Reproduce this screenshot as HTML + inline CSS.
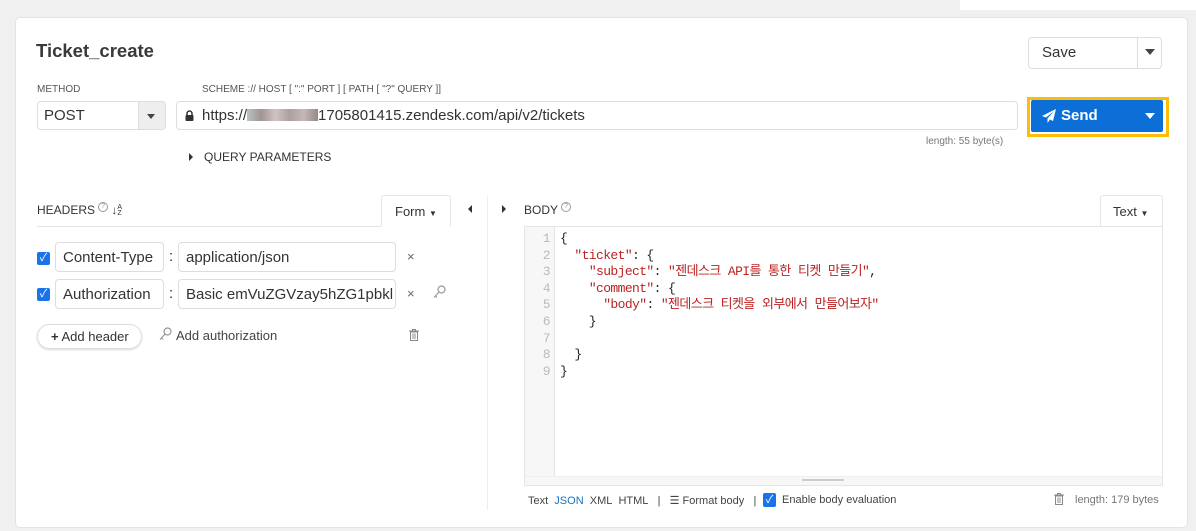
<!DOCTYPE html>
<html><head><meta charset="utf-8"><style>
*{box-sizing:border-box;margin:0;padding:0}
body{width:1196px;height:531px;background:#f0f0f0;font-family:"Liberation Sans","Noto Sans CJK KR",sans-serif;color:#333;position:relative;overflow:hidden}
.a{position:absolute}
.card{left:15px;top:17px;width:1173px;height:511px;background:#fff;border-radius:5px;border:1px solid #e4e4e4}
.lbl{font-size:10px;color:#555}
.inp{border:1px solid #ddd;border-radius:4px;background:#fff;font-size:15px}
.code{font-family:"Liberation Mono","Noto Sans CJK KR",monospace;font-size:13px;color:#222;letter-spacing:-0.6px}
.s{color:#b22}
.ln{color:#bbb;text-align:right;width:22px}
.q{display:inline-block;width:10px;height:10px;border:1px solid #999;border-radius:50%;font-size:7px;line-height:8px;text-align:center;color:#999;vertical-align:6px;margin-left:3px}
</style></head><body>
<div class="a" style="left:960px;top:0;width:236px;height:10px;background:#fff"></div>
<div class="a card"></div>
<div class="a" style="left:36px;top:40px;font-size:18.5px;font-weight:bold;color:#3a3a3a">Ticket_create</div>
<div class="a inp" style="left:1028px;top:37px;width:134px;height:32px"></div>
<div class="a" style="left:1137px;top:38px;width:1px;height:30px;background:#ddd"></div>
<div class="a" style="left:1042px;top:44px;font-size:15px">Save</div>
<div class="a" style="left:1145px;top:49px;width:0;height:0;border-left:5px solid transparent;border-right:5px solid transparent;border-top:6px solid #444"></div>
<div class="a lbl" style="left:37px;top:84px">METHOD</div>
<div class="a lbl" style="left:202px;top:84px">SCHEME :// HOST [ ":" PORT ] [ PATH [ "?" QUERY ]]</div>
<div class="a inp" style="left:37px;top:101px;width:129px;height:29px;overflow:hidden"><div class="a" style="left:100px;top:0;width:29px;height:29px;background:#eee;border-left:1px solid #ddd"></div></div>
<div class="a" style="left:44px;top:107px;font-size:15px">POST</div>
<div class="a" style="left:147px;top:114px;border-left:4px solid transparent;border-right:4px solid transparent;border-top:5px solid #444"></div>
<div class="a inp" style="left:176px;top:101px;width:842px;height:29px"></div>
<svg class="a" style="left:185px;top:110px" width="9" height="11" viewBox="0 0 9 11"><path d="M2 5V3.5a2.5 2.5 0 0 1 5 0V5" fill="none" stroke="#333" stroke-width="1.5"/><rect x="0.5" y="5" width="8" height="6" rx="1" fill="#333"/></svg>
<div class="a" style="left:202px;top:107px;font-size:15px">https://<span style="display:inline-block;width:71px;height:12px;background:linear-gradient(90deg,#9aa 0,#766 20%,#baa 40%,#877 60%,#a99 80%,#655);opacity:.7;vertical-align:-1px"></span>1705801415.zendesk.com/api/v2/tickets</div>
<div class="a" style="left:1027px;top:97px;width:142px;height:40px;border:3px solid #fbbd08"></div>
<div class="a" style="left:1031px;top:100px;width:132px;height:32px;background:#0c6fd8;border-radius:2px"></div>
<div class="a" style="left:1137px;top:100px;width:1px;height:32px;background:#2a63b0"></div>
<svg class="a" style="left:1042px;top:109px" width="14" height="14" viewBox="0 0 14 14"><path d="M14 0L0 7l4 1.5L12 2 5.5 9.5V14l2.5-3.5 3 1.5z" fill="#fff"/></svg>
<div class="a" style="left:1061px;top:107px;font-size:15px;font-weight:bold;color:#fff">Send</div>
<div class="a" style="left:1145px;top:113px;border-left:5px solid transparent;border-right:5px solid transparent;border-top:6px solid #fff"></div>
<div class="a" style="left:926px;top:136px;font-size:10px;color:#777">length: 55 byte(s)</div>
<div class="a" style="left:189px;top:153px;border-top:4px solid transparent;border-bottom:4px solid transparent;border-left:4px solid #333"></div>
<div class="a" style="left:204px;top:150px;font-size:12px;color:#333">QUERY PARAMETERS</div>
<!-- headers -->
<div class="a" style="left:37px;top:202px;font-size:12px;white-space:nowrap">HEADERS<span class="q">?</span> <span style="font-size:12px;font-weight:bold">↓</span><span style="font-size:7px;display:inline-block;line-height:6px;vertical-align:-1px">A<br>Z</span></div>
<div class="a" style="left:37px;top:226px;width:413px;height:1px;background:#e5e5e5"></div>
<div class="a" style="left:381px;top:195px;width:70px;height:32px;border:1px solid #e5e5e5;border-bottom:1px solid #fff;border-radius:3px 3px 0 0;background:#fff;font-size:13px;padding:8px 0 0 13px">Form <span style="font-size:8px">▼</span></div>
<div class="a" style="left:468px;top:205px;border-top:4px solid transparent;border-bottom:4px solid transparent;border-right:4px solid #333"></div>
<div class="a" style="left:487px;top:195px;width:1px;height:315px;background:#eee"></div>
<div class="a" style="left:502px;top:205px;border-top:4px solid transparent;border-bottom:4px solid transparent;border-left:4px solid #333"></div>
<!-- rows -->
<div class="a" style="left:37px;top:252px;width:13px;height:13px;background:#1a73e8;border-radius:2px;color:#fff;font-size:11px;line-height:13px;text-align:center">✓</div>
<div class="a inp" style="left:55px;top:242px;width:109px;height:30px;padding:6px 0 0 7px">Content-Type</div>
<div class="a" style="left:169px;top:248px;font-size:15px">:</div>
<div class="a inp" style="left:178px;top:242px;width:218px;height:30px;padding:6px 0 0 7px">application/json</div>
<div class="a" style="left:407px;top:249px;font-size:13px;color:#666">×</div>
<div class="a" style="left:37px;top:288px;width:13px;height:13px;background:#1a73e8;border-radius:2px;color:#fff;font-size:11px;line-height:13px;text-align:center">✓</div>
<div class="a inp" style="left:55px;top:279px;width:109px;height:30px;padding:6px 0 0 7px">Authorization</div>
<div class="a" style="left:169px;top:285px;font-size:15px">:</div>
<div class="a inp" style="left:178px;top:279px;width:218px;height:30px;padding:6px 0 0 7px;overflow:hidden;white-space:nowrap">Basic emVuZGVzay5hZG1pbkl</div>
<div class="a" style="left:407px;top:286px;font-size:13px;color:#666">×</div>
<svg class="a" style="left:433px;top:285px" width="13" height="14" viewBox="0 0 13 14"><circle cx="8.5" cy="4.5" r="3.5" fill="none" stroke="#999" stroke-width="1.2"/><path d="M6 7L1 12.5M2.5 11l1.5 1.5" stroke="#999" stroke-width="1.2" fill="none"/></svg>
<div class="a" style="left:37px;top:324px;width:105px;height:25px;border:1px solid #ddd;border-radius:13px;box-shadow:0 1px 2px rgba(0,0,0,.15);font-size:13px;padding:4px 0 0 13px"><b>+</b> Add header</div>
<svg class="a" style="left:159px;top:327px" width="13" height="14" viewBox="0 0 13 14"><circle cx="8.5" cy="4.5" r="3.5" fill="none" stroke="#999" stroke-width="1.2"/><path d="M6 7L1 12.5M2.5 11l1.5 1.5" stroke="#999" stroke-width="1.2" fill="none"/></svg>
<div class="a" style="left:176px;top:328px;font-size:13px;color:#444">Add authorization</div>
<svg class="a" style="left:409px;top:329px" width="10" height="12" viewBox="0 0 10 12"><path d="M0 2h10M3.5 2V.5h3V2M1.5 3h7v8.5h-7z M4 4.5v5.5M6 4.5v5.5" fill="none" stroke="#888" stroke-width="1"/></svg>
<!-- body -->
<div class="a" style="left:524px;top:202px;font-size:12px">BODY<span class="q">?</span></div>
<div class="a" style="left:1100px;top:195px;width:63px;height:32px;border:1px solid #e5e5e5;border-bottom:none;border-radius:3px 3px 0 0;font-size:13px;padding:8px 0 0 12px">Text <span style="font-size:8px">▼</span></div>
<div class="a" style="left:524px;top:226px;width:639px;height:260px;border:1px solid #e5e5e5"></div>
<div class="a" style="left:525px;top:227px;width:30px;height:250px;background:#f7f7f7;border-right:1px solid #e5e5e5"></div>
<div class="a" style="left:525px;top:476px;width:637px;height:9px;background:#f7f7f7;border-top:1px solid #eee"></div>
<div class="a" style="left:802px;top:479px;width:42px;height:2px;background:#ccc"></div>
<div class="a code" style="left:528px;top:231px;line-height:16.6px">
<div style="display:flex"><div class="ln">1</div><div style="padding-left:10px;white-space:pre">{</div></div>
<div style="display:flex"><div class="ln">2</div><div style="padding-left:10px;white-space:pre">  <span class="s">"ticket"</span>: {</div></div>
<div style="display:flex"><div class="ln">3</div><div style="padding-left:10px;white-space:pre">    <span class="s">"subject"</span>: <span class="s">"젠데스크 API를 통한 티켓 만들기"</span>,</div></div>
<div style="display:flex"><div class="ln">4</div><div style="padding-left:10px;white-space:pre">    <span class="s">"comment"</span>: {</div></div>
<div style="display:flex"><div class="ln">5</div><div style="padding-left:10px;white-space:pre">      <span class="s">"body"</span>: <span class="s">"젠데스크 티켓을 외부에서 만들어보자"</span></div></div>
<div style="display:flex"><div class="ln">6</div><div style="padding-left:10px;white-space:pre">    }</div></div>
<div style="display:flex"><div class="ln">7</div><div style="padding-left:10px;white-space:pre"> </div></div>
<div style="display:flex"><div class="ln">8</div><div style="padding-left:10px;white-space:pre">  }</div></div>
<div style="display:flex"><div class="ln">9</div><div style="padding-left:10px;white-space:pre">}</div></div>
</div>
<div class="a" style="left:528px;top:494px;font-size:11px;color:#444;white-space:nowrap">Text&nbsp; <span style="color:#1a73c8">JSON</span>&nbsp; XML&nbsp; HTML&nbsp;&nbsp; |&nbsp;&nbsp; ☰ Format body&nbsp;&nbsp; |&nbsp;&nbsp;</div>
<div class="a" style="left:763px;top:493px;width:13px;height:14px;background:#1a73e8;border-radius:2px;color:#fff;text-align:center;line-height:14px;font-size:11px">✓</div>
<div class="a" style="left:782px;top:494px;font-size:11px;color:#444">Enable body evaluation</div>
<svg class="a" style="left:1054px;top:493px" width="10" height="12" viewBox="0 0 10 12"><path d="M0 2h10M3.5 2V.5h3V2M1.5 3h7v8.5h-7z M4 4.5v5.5M6 4.5v5.5" fill="none" stroke="#888" stroke-width="1"/></svg>
<div class="a" style="left:1075px;top:494px;font-size:11px;color:#777">length: 179 bytes</div>
</body></html>
